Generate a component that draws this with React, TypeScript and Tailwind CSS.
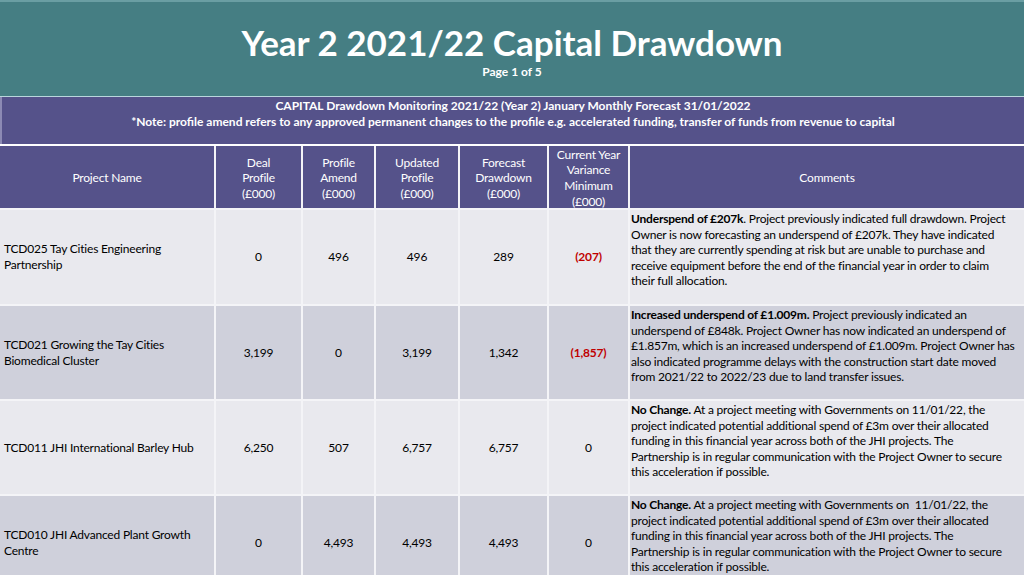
import React from 'react';

type Row = {
  name: string[];
  deal: string;
  amend: string;
  updated: string;
  forecast: string;
  variance: string;
  negative: boolean;
  lead: string;
  comment: string[];
  shade: 'light' | 'dark';
};

const rows: Row[] = [
  {
    name: ['TCD025 Tay Cities Engineering', 'Partnership'],
    deal: '0',
    amend: '496',
    updated: '496',
    forecast: '289',
    variance: '(207)',
    negative: true,
    lead: 'Underspend of £207k',
    comment: [
      '. Project previously indicated full drawdown. Project',
      'Owner is now forecasting an underspend of £207k. They have indicated',
      'that they are currently spending at risk but are unable to purchase and',
      'receive equipment before the end of the financial year in order to claim',
      'their full allocation.',
    ],
    shade: 'light',
  },
  {
    name: ['TCD021 Growing the Tay Cities', 'Biomedical Cluster'],
    deal: '3,199',
    amend: '0',
    updated: '3,199',
    forecast: '1,342',
    variance: '(1,857)',
    negative: true,
    lead: 'Increased underspend of £1.009m.',
    comment: [
      ' Project previously indicated an',
      'underspend of £848k. Project Owner has now indicated an underspend of',
      '£1.857m, which is an increased underspend of £1.009m. Project Owner has',
      'also indicated programme delays with the construction start date moved',
      'from 2021/22 to 2022/23 due to land transfer issues.',
    ],
    shade: 'dark',
  },
  {
    name: ['TCD011 JHI International Barley Hub'],
    deal: '6,250',
    amend: '507',
    updated: '6,757',
    forecast: '6,757',
    variance: '0',
    negative: false,
    lead: 'No Change.',
    comment: [
      ' At a project meeting with Governments on 11/01/22, the',
      'project indicated potential additional spend of £3m over their allocated',
      'funding in this financial year across both of the JHI projects. The',
      'Partnership is in regular communication with the Project Owner to secure',
      'this acceleration if possible.',
    ],
    shade: 'light',
  },
  {
    name: ['TCD010 JHI Advanced Plant Growth', 'Centre'],
    deal: '0',
    amend: '4,493',
    updated: '4,493',
    forecast: '4,493',
    variance: '0',
    negative: false,
    lead: 'No Change.',
    comment: [
      ' At a project meeting with Governments on  11/01/22, the',
      'project indicated potential additional spend of £3m over their allocated',
      'funding in this financial year across both of the JHI projects. The',
      'Partnership is in regular communication with the Project Owner to secure',
      'this acceleration if possible.',
    ],
    shade: 'dark',
  },
];

const headers: string[][] = [
  ['Deal', 'Profile', '(£000)'],
  ['Profile', 'Amend', '(£000)'],
  ['Updated', 'Profile', '(£000)'],
  ['Forecast', 'Drawdown', '(£000)'],
  ['Current Year', 'Variance', 'Minimum', '(£000)'],
];

export default function App() {
  return (
    <div
      className="w-[1024px] h-[575px] overflow-hidden bg-white flex flex-col"
      style={{ fontFamily: 'Lato, "Open Sans", sans-serif' }}
    >
      {/* Title band */}
      <header className="h-[97px] shrink-0 bg-[#457e83] border-t-2 border-t-[#6a9ea3] border-b border-b-[#b9d6dc] flex flex-col items-center text-white">
        <h1 className="mt-[20px] text-[35px] leading-[40px] font-bold">Year 2 2021/22 Capital Drawdown</h1>
        <p className="mt-[3px] text-[12px] leading-[14px] font-bold">Page 1 of 5</p>
      </header>

      {/* Note band */}
      <section className="h-[47px] shrink-0 bg-[#55528a] border-l-2 border-l-[#8c8ab4] flex flex-col items-center pt-[1px] text-white text-[12px] leading-[16px] font-bold">
        <p>CAPITAL Drawdown Monitoring 2021/22 (Year 2) January Monthly Forecast 31/01/2022</p>
        <p>*Note: profile amend refers to any approved permanent changes to the profile e.g. accelerated funding, transfer of funds from revenue to capital</p>
      </section>

      {/* Table */}
      <div className="mt-[2px] grid grid-cols-[214px_85px_71px_82px_87px_79px_1fr] grid-rows-[62px_94px_93px_93px_93px] gap-[2px] bg-[#f4f4f7] text-[12px] leading-[15.6px] tracking-[-0.2px]">
        <div className="bg-[#55528a] text-white flex items-center justify-center pt-[2px]">Project Name</div>
        {headers.map((h, i) => (
          <div key={i} className="bg-[#55528a] text-white flex flex-col items-center justify-center text-center pt-[2px]">
            {h.map((l) => (
              <span key={l}>{l}</span>
            ))}
          </div>
        ))}
        <div className="bg-[#55528a] text-white flex items-center justify-center pt-[2px]">Comments</div>

        {rows.map((r, i) => {
          const bg = r.shade === 'light' ? 'bg-[#e9e9ee]' : 'bg-[#cfd0db]';
          return (
            <React.Fragment key={i}>
              <div className={`${bg} text-black flex flex-col justify-center pl-[4px]`}>
                {r.name.map((l) => (
                  <span key={l} className="whitespace-nowrap">{l}</span>
                ))}
              </div>
              {[r.deal, r.amend, r.updated, r.forecast].map((v, j) => (
                <div key={j} className={`${bg} text-black flex items-center justify-center`}>{v}</div>
              ))}
              <div
                className={`${bg} flex items-center justify-center ${
                  r.negative ? 'text-[#c00000] font-bold' : 'text-black'
                }`}
              >
                {r.variance}
              </div>
              <div className={`${bg} text-black pl-[1px] pt-[1px] flex flex-col`}>
                {r.comment.map((l, k) => (
                  <span key={k} className="whitespace-pre">
                    {k === 0 && <b>{r.lead}</b>}
                    {l}
                  </span>
                ))}
              </div>
            </React.Fragment>
          );
        })}
      </div>
    </div>
  );
}
